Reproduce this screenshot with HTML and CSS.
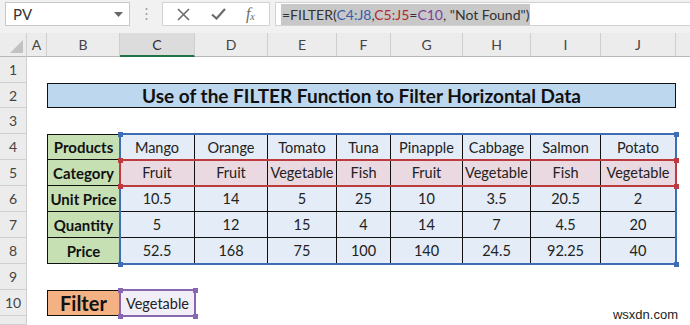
FILE: index.html
```html
<!DOCTYPE html>
<html lang="en">
<head>
<meta charset="utf-8">
<title>FILTER horizontal data</title>
<link rel="stylesheet" href="styles.css">
</head>
<body>
<div class="fbar">
  <div class="namebox"><span>PV</span>
    <svg class="tri" width="9" height="5" viewBox="0 0 9 5"><path d="M0 0h9L4.5 5z" fill="#666"/></svg>
  </div>
  <div class="dots">
    <svg width="3" height="14" viewBox="0 0 3 14"><circle cx="1.5" cy="2" r="1" fill="#9a9a9a"/><circle cx="1.5" cy="7" r="1" fill="#9a9a9a"/><circle cx="1.5" cy="12" r="1" fill="#9a9a9a"/></svg>
  </div>
  <div class="btns">
    <svg width="13" height="13" viewBox="0 0 13 13"><path d="M1 1L12 12M12 1L1 12" stroke="#6b6b6b" stroke-width="1.6" fill="none"/></svg>
    <svg width="15" height="12" viewBox="0 0 15 12"><path d="M1 6.5L5.5 10.5L14 1" stroke="#6b6b6b" stroke-width="2.2" fill="none"/></svg>
    <span class="fx">f<sub>x</sub></span>
  </div>
  <div class="formula"><span class="hl">=FILTER(<span class="rb">C4:J8</span>,<span class="rr">C5:J5</span>=<span class="rp">C10</span>, "Not Found")</span></div>
</div>

<div class="sheet">
  <div class="corner"><svg width="13" height="13" viewBox="0 0 13 13"><path d="M13 0V13H0z" fill="#c2c2c2"/></svg></div>
  <div class="ch">A</div>
  <div class="ch">B</div>
  <div class="ch sel">C</div>
  <div class="ch">D</div>
  <div class="ch">E</div>
  <div class="ch">F</div>
  <div class="ch">G</div>
  <div class="ch">H</div>
  <div class="ch">I</div>
  <div class="ch">J</div>
  <div class="ch last"></div>

  <div class="rh">1</div>
  <div class="rh">2</div>
  <div class="rh">3</div>
  <div class="rh">4</div>
  <div class="rh">5</div>
  <div class="rh">6</div>
  <div class="rh">7</div>
  <div class="rh">8</div>
  <div class="rh">9</div>
  <div class="rh">10</div>
  <div class="rh"></div>

  <div class="title">Use of the FILTER Function to Filter Horizontal Data</div>

  <div class="tr r4">
    <div class="lbl top">Products</div>
    <div class="cell top">Mango</div><div class="cell top">Orange</div><div class="cell top">Tomato</div><div class="cell top">Tuna</div><div class="cell top">Pinapple</div><div class="cell top">Cabbage</div><div class="cell top">Salmon</div><div class="cell top">Potato</div>
  </div>
  <div class="tr r5">
    <div class="lbl">Category</div>
    <div class="cell pink">Fruit</div><div class="cell pink">Fruit</div><div class="cell pink">Vegetable</div><div class="cell pink">Fish</div><div class="cell pink">Fruit</div><div class="cell pink">Vegetable</div><div class="cell pink">Fish</div><div class="cell pink">Vegetable</div>
  </div>
  <div class="tr r6">
    <div class="lbl">Unit Price</div>
    <div class="cell">10.5</div><div class="cell">14</div><div class="cell">5</div><div class="cell">25</div><div class="cell">10</div><div class="cell">3.5</div><div class="cell">20.5</div><div class="cell">2</div>
  </div>
  <div class="tr r7">
    <div class="lbl">Quantity</div>
    <div class="cell">5</div><div class="cell">12</div><div class="cell">15</div><div class="cell">4</div><div class="cell">14</div><div class="cell">7</div><div class="cell">4.5</div><div class="cell">20</div>
  </div>
  <div class="tr r8">
    <div class="lbl">Price</div>
    <div class="cell">52.5</div><div class="cell">168</div><div class="cell">75</div><div class="cell">100</div><div class="cell">140</div><div class="cell">24.5</div><div class="cell">92.25</div><div class="cell">40</div>
  </div>

  <div class="flabel">Filter</div>
  <div class="fvalue">Vegetable</div>

  <div class="sel-range blue"><i class="h tl"></i><i class="h tr2"></i><i class="h bl"></i><i class="h br"></i></div>
  <div class="sel-range red"><i class="h tl"></i><i class="h tr2"></i><i class="h bl"></i><i class="h br"></i></div>
  <div class="sel-range purple"><i class="h tl"></i><i class="h tr2"></i><i class="h bl"></i><i class="h br"></i></div>

  <div class="wm">wsxdn.com</div>
</div>
</body>
</html>
```

FILE: styles.css
```css
html, body {
  margin: 0;
  padding: 0;
}
body {
  width: 690px;
  height: 325px;
  overflow: hidden;
  background: #ffffff;
  font-family: Lato, "Open Sans", sans-serif;
  color: #222;
}

/* ---------- formula bar ---------- */
.fbar {
  height: 33px;
  box-sizing: border-box;
  padding-top: 2px;
  background: #f1f1f1;
  display: flex;
  align-items: flex-start;
}
.namebox {
  margin-left: 5px;
  width: 125px;
  height: 24px;
  box-sizing: border-box;
  background: #fff;
  border: 1px solid #c9c9c9;
  display: flex;
  align-items: center;
  justify-content: space-between;
  padding: 0 6px 0 7px;
  font-size: 15px;
  color: #333;
}
.dots {
  width: 32px;
  height: 24px;
  display: flex;
  align-items: center;
  justify-content: center;
}
.btns {
  width: 108px;
  height: 24px;
  box-sizing: border-box;
  background: #fff;
  border: 1px solid #d2d2d2;
  display: flex;
  align-items: center;
  justify-content: space-around;
  padding: 0 4px;
}
.fx {
  font-family: "Liberation Serif", serif;
  font-style: italic;
  font-size: 16px;
  color: #6b6b6b;
}
.fx sub {
  font-size: 10px;
  vertical-align: -1px;
}
.formula {
  margin-left: 5px;
  flex: 1;
  height: 24px;
  box-sizing: border-box;
  background: #fff;
  border: 1px solid #d2d2d2;
  border-right: none;
  padding-left: 5px;
  display: flex;
  align-items: center;
  font-size: 14px;
  color: #333;
}
.hl {
  background: #c8c8c8;
  padding: 2px 1px 2px;
}
.rb { color: #3a5ba8; }
.rr { color: #b3282c; }
.rp { color: #7a3f9a; }

/* ---------- sheet grid ---------- */
.sheet {
  display: grid;
  grid-template-columns: 27px 20px 73px 75px 73px 69px 54px 72px 68px 70px 75px 1fr;
  grid-template-rows: 24px 26px 25px 26px 26px 26px 26px 26px 26px 26px 26px 1fr;
  height: 292px;
  font-size: 14.5px;
}
.corner {
  background: #ececec;
  border-right: 1px solid #cfcfcf;
  border-bottom: 1px solid #b7b7b7;
  box-sizing: border-box;
  display: flex;
  align-items: flex-end;
  justify-content: flex-end;
  padding: 0 3px 3px 0;
}
.ch {
  background: #ececec;
  border-right: 1px solid #cfcfcf;
  border-bottom: 1px solid #b7b7b7;
  box-sizing: border-box;
  display: flex;
  align-items: center;
  justify-content: center;
  font-size: 14px;
  color: #444;
}
.ch.sel {
  background: #dcdcdc;
  border-bottom: 2px solid #217346;
  color: #2d2d2d;
}
.ch.last { border-right: none; }
.rh {
  grid-column: 1;
  background: #ececec;
  border-right: 1px solid #cfcfcf;
  border-bottom: 1px solid #cfcfcf;
  box-sizing: border-box;
  display: flex;
  align-items: center;
  justify-content: center;
  font-size: 14px;
  color: #444;
}

.title {
  grid-column: 3 / 12;
  grid-row: 3;
  background: #bdd7ee;
  border: 1px solid #111;
  box-sizing: border-box;
  display: flex;
  align-items: center;
  justify-content: center;
  font-weight: 700;
  font-size: 19px;
  color: #111;
}

.tr { display: contents; }
.r4 > * { grid-row: 5; }
.r5 > * { grid-row: 6; }
.r6 > * { grid-row: 7; }
.r7 > * { grid-row: 8; }
.r8 > * { grid-row: 9; }
.tr > :nth-child(1) { grid-column: 3; }
.tr > :nth-child(2) { grid-column: 4; }
.tr > :nth-child(3) { grid-column: 5; }
.tr > :nth-child(4) { grid-column: 6; }
.tr > :nth-child(5) { grid-column: 7; }
.tr > :nth-child(6) { grid-column: 8; }
.tr > :nth-child(7) { grid-column: 9; }
.tr > :nth-child(8) { grid-column: 10; }
.tr > :nth-child(9) { grid-column: 11; }

.lbl {
  background: #c6e0b4;
  border-left: 1px solid #111;
  border-right: 1px solid #111;
  border-bottom: 1px solid #111;
  box-sizing: border-box;
  display: flex;
  align-items: center;
  justify-content: center;
  font-weight: 700;
  font-size: 15px;
  color: #111;
}
.cell {
  background: #e3ecf7;
  border-right: 1px solid #111;
  border-bottom: 1px solid #111;
  box-sizing: border-box;
  display: flex;
  align-items: center;
  justify-content: center;
  color: #222;
}
.top { border-top: 1px solid #111; }
.cell.pink { background: #ead9e1; }

.flabel {
  grid-column: 3;
  grid-row: 11;
  background: #f4b183;
  border: 1px solid #111;
  box-sizing: border-box;
  display: flex;
  align-items: center;
  padding-left: 12px;
  font-weight: 700;
  font-size: 20px;
  color: #111;
}
.fvalue {
  grid-column: 4;
  grid-row: 11;
  background: #f1eef8;
  display: flex;
  align-items: center;
  justify-content: center;
  color: #222;
}

/* ---------- range highlights ---------- */
.sel-range {
  position: relative;
  margin: -1px;
  box-sizing: border-box;
  pointer-events: none;
}
.sel-range.blue {
  grid-column: 4 / 12;
  grid-row: 5 / 10;
  border: 2px solid #3e6db4;
}
.sel-range.red {
  grid-column: 4 / 12;
  grid-row: 6;
  border: 2px solid #bd3b3e;
}
.sel-range.purple {
  grid-column: 4;
  grid-row: 11;
  border: 2px solid #8866b0;
}
.h {
  position: absolute;
  width: 5px;
  height: 5px;
}
.blue .h { background: #3e6db4; }
.red .h { background: #bd3b3e; }
.purple .h { background: #8866b0; }
.h.tl { left: -3.5px; top: -3.5px; }
.h.tr2 { right: -3.5px; top: -3.5px; }
.h.bl { left: -3.5px; bottom: -3.5px; }
.h.br { right: -3.5px; bottom: -3.5px; }

.wm {
  grid-column: 10 / 13;
  grid-row: 11 / 13;
  align-self: end;
  justify-self: end;
  margin: 0 12px 3px 0;
  line-height: 14px;
  font-family: "Liberation Sans", Arial, sans-serif;
  font-size: 13px;
  color: #222;
}
```
